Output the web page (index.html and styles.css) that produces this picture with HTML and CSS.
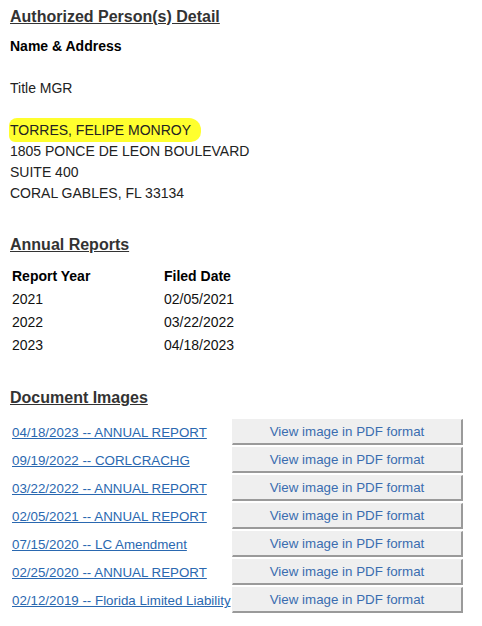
FILE: index.html
```html
<!DOCTYPE html>
<html>
<head>
<meta charset="utf-8">
<link rel="stylesheet" href="styles.css">
</head>
<body>
<section class="detail">
  <h2 class="sec-title">Authorized Person(s) Detail</h2>
  <div class="label">Name &amp; Address</div>
  <div class="title-line">Title MGR</div>
  <div class="address">
    <div><span class="hl">TORRES, FELIPE MONROY</span></div>
    <div>1805 PONCE DE LEON BOULEVARD</div>
    <div>SUITE 400</div>
    <div>CORAL GABLES, FL 33134</div>
  </div>
</section>

<section class="reports">
  <h2 class="sec-title">Annual Reports</h2>
  <div class="rep-table">
    <div class="th">Report Year</div><div class="th">Filed Date</div>
    <div>2021</div><div>02/05/2021</div>
    <div>2022</div><div>03/22/2022</div>
    <div>2023</div><div>04/18/2023</div>
  </div>
</section>

<section class="docs">
  <h2 class="sec-title">Document Images</h2>
  <div class="doc-table">
    <a class="doc-link" href="#">04/18/2023 -- ANNUAL REPORT</a><span class="btn">View image in PDF format</span>
    <a class="doc-link" href="#">09/19/2022 -- CORLCRACHG</a><span class="btn">View image in PDF format</span>
    <a class="doc-link" href="#">03/22/2022 -- ANNUAL REPORT</a><span class="btn">View image in PDF format</span>
    <a class="doc-link" href="#">02/05/2021 -- ANNUAL REPORT</a><span class="btn">View image in PDF format</span>
    <a class="doc-link" href="#">07/15/2020 -- LC Amendment</a><span class="btn">View image in PDF format</span>
    <a class="doc-link" href="#">02/25/2020 -- ANNUAL REPORT</a><span class="btn">View image in PDF format</span>
    <a class="doc-link" href="#">02/12/2019 -- Florida Limited Liability</a><span class="btn">View image in PDF format</span>
  </div>
</section>
</body>
</html>
```
FILE: styles.css
```css
html, body {
  margin: 0;
  padding: 0;
  background: #fff;
}
body {
  font-family: "Liberation Sans", Arial, sans-serif;
  font-size: 14px;
  color: #111;
  padding: 7px 10px 0 10px;
}
.sec-title {
  margin: 0;
  font-size: 16px;
  line-height: 20px;
  font-weight: bold;
  color: #333;
  text-decoration: underline;
}
.label {
  margin-top: 9px;
  line-height: 20px;
  font-weight: bold;
  color: #000;
}
.title-line {
  margin-top: 22px;
  line-height: 20px;
  color: #222;
}
.address {
  margin-top: 22px;
  line-height: 21px;
  color: #222;
}
.hl {
  background: #ffff2e;
  padding: 4px 10px 4px 1px;
  margin-left: -1px;
  border-radius: 8px 12px 10px 6px;
}
.reports {
  margin-top: 31px;
}
.rep-table {
  margin-top: 9px;
  padding-left: 2px;
  display: grid;
  grid-template-columns: 152px 152px;
  grid-auto-rows: 23px;
  align-items: center;
  color: #111;
}
.rep-table .th {
  font-weight: bold;
  color: #000;
}
.docs {
  margin-top: 32px;
}
.doc-table {
  margin-top: 11px;
  padding-left: 2px;
  display: grid;
  grid-template-columns: 220px 231px;
  grid-auto-rows: 26px;
  row-gap: 2px;
  align-items: center;
  font-size: 13.33px;
}
.doc-link {
  color: #2a68b0;
  text-decoration: underline;
  white-space: nowrap;
  line-height: 20px;
  margin-top: 2px;
}
.btn {
  box-sizing: border-box;
  height: 26px;
  display: flex;
  align-items: center;
  justify-content: center;
  background: #efefef;
  color: #3a6db0;
  border-style: solid;
  border-width: 1px 2px 2px 1px;
  border-color: #efefef #9a9a9a #9a9a9a #efefef;
}
```
